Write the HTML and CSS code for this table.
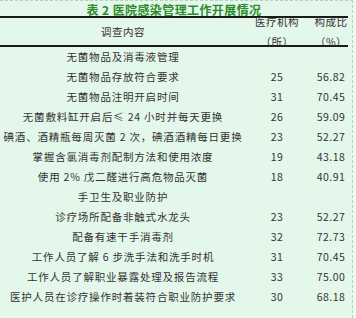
FILE: index.html
```html
<!DOCTYPE html>
<html lang="zh">
<head>
<meta charset="utf-8">
<link rel="stylesheet" href="styles.css">
</head>
<body>
<div class="page">
  <div class="title">表 2 医院感染管理工作开展情况</div>
  <div class="head">
    <div class="c1 hcell">调查内容</div>
    <div class="c2 hcell"><span>医疗机构</span><span>（所）</span></div>
    <div class="c3 hcell"><span>构成比</span><span>（%）</span></div>
  </div>
  <div class="rows">
    <div class="row"><div class="c1">无菌物品及消毒液管理</div><div class="c2"></div><div class="c3"></div></div>
    <div class="row"><div class="c1">无菌物品存放符合要求</div><div class="c2">25</div><div class="c3">56.82</div></div>
    <div class="row"><div class="c1">无菌物品注明开启时间</div><div class="c2">31</div><div class="c3">70.45</div></div>
    <div class="row"><div class="c1">无菌敷料缸开启后≤ 24 小时并每天更换</div><div class="c2">26</div><div class="c3">59.09</div></div>
    <div class="row"><div class="c1">碘酒、酒精瓶每周灭菌 2 次，碘酒酒精每日更换</div><div class="c2">23</div><div class="c3">52.27</div></div>
    <div class="row"><div class="c1">掌握含氯消毒剂配制方法和使用浓度</div><div class="c2">19</div><div class="c3">43.18</div></div>
    <div class="row"><div class="c1">使用 2% 戊二醛进行高危物品灭菌</div><div class="c2">18</div><div class="c3">40.91</div></div>
    <div class="row"><div class="c1">手卫生及职业防护</div><div class="c2"></div><div class="c3"></div></div>
    <div class="row"><div class="c1">诊疗场所配备非触式水龙头</div><div class="c2">23</div><div class="c3">52.27</div></div>
    <div class="row"><div class="c1">配备有速干手消毒剂</div><div class="c2">32</div><div class="c3">72.73</div></div>
    <div class="row"><div class="c1">工作人员了解 6 步洗手法和洗手时机</div><div class="c2">31</div><div class="c3">70.45</div></div>
    <div class="row"><div class="c1">工作人员了解职业暴露处理及报告流程</div><div class="c2">33</div><div class="c3">75.00</div></div>
    <div class="row"><div class="c1">医护人员在诊疗操作时着装符合职业防护要求</div><div class="c2">30</div><div class="c3">68.18</div></div>
  </div>
</div>
</body>
</html>
```
FILE: styles.css
```css
html, body {
  margin: 0;
  padding: 0;
  background: #eef9f2;
}
body {
  font-family: "Noto Sans CJK SC", "Noto Sans", sans-serif;
  color: #333;
}
.page {
  width: 353px;
  height: 318px;
  box-sizing: border-box;
  background: #e3f7ea;
  border-top: 1px dashed #b9cfc1;
  border-right: 1px dashed #b9cfc1;
  overflow: hidden;
}
.title {
  height: 15px;
  line-height: 17px;
  font-size: 12px;
  font-weight: bold;
  color: #2a8c2a;
  text-align: center;
  padding-right: 4px;
  letter-spacing: 0.4px;
}
.head {
  display: grid;
  grid-template-columns: 246px 62px 40px;
  width: 348px;
  height: 27px;
  border-top: 2px solid #1a1a1a;
  border-bottom: 2px solid #1a1a1a;
  font-size: 10.5px;
  letter-spacing: 0.5px;
}
.hcell {
  display: flex;
  flex-direction: column;
  justify-content: center;
  align-items: center;
  line-height: 19.5px;
  height: 27px;
  overflow: visible;
}
.head .c3 {
  padding-left: 6px;
}
.rows {
  display: flex;
  flex-direction: column;
}
.row {
  display: grid;
  grid-template-columns: 246px 62px 40px;
  height: 20px;
  line-height: 20px;
  font-size: 10.5px;
  letter-spacing: 0.8px;
  white-space: nowrap;
}
.row .c1 {
  text-align: center;
}
.row .c2 {
  text-align: center;
  font-size: 10.5px;
  letter-spacing: 0.3px;
}
.row .c3 {
  text-align: center;
  padding-left: 6px;
  letter-spacing: 0.5px;
}
```
